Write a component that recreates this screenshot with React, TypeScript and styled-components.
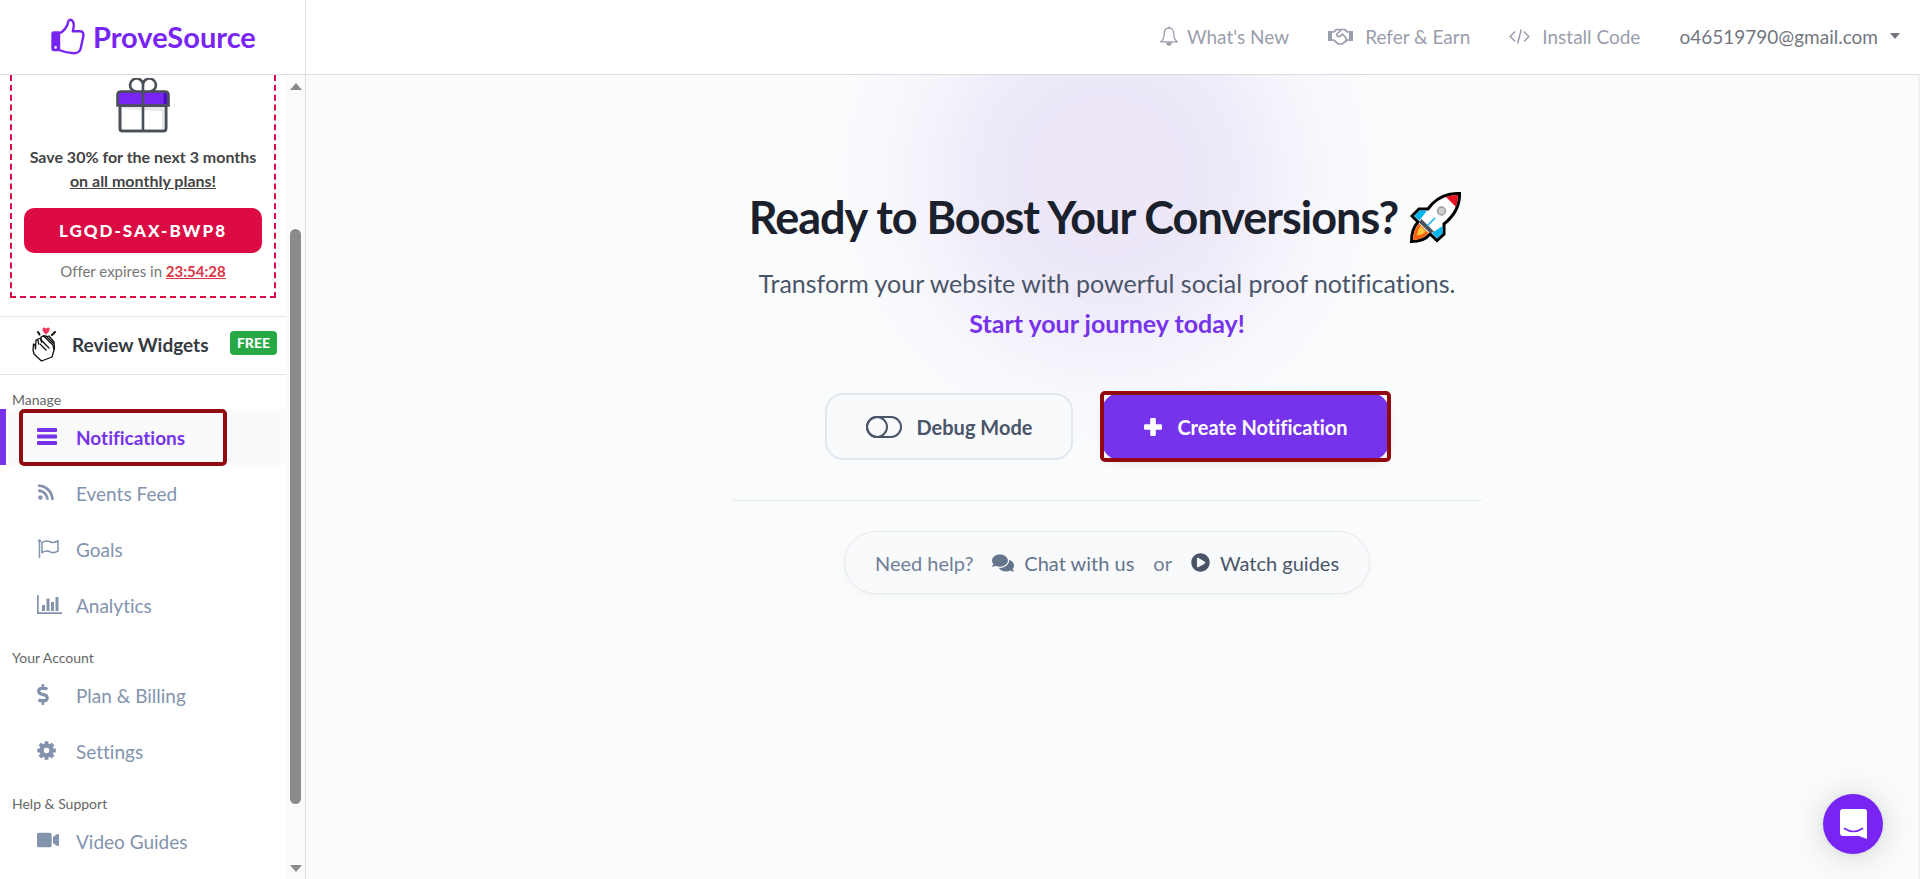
import React from 'react';
import styled, { createGlobalStyle, css } from 'styled-components';
import { FaRss, FaDollarSign, FaVideo, FaComments, FaPlayCircle } from 'react-icons/fa';

const GlobalStyle = createGlobalStyle`
  *, *::before, *::after { box-sizing: border-box; }
  html, body, #root { height: 100%; }
  body {
    margin: 0;
    background: #fafcfc;
    font-family: Lato, sans-serif;
    font-variant-ligatures: none;
    color: #444;
  }
  a { color: inherit; text-decoration: none; }
  button { font: inherit; font-variant-ligatures: none; cursor: pointer; }
  svg { display: block; flex: none; }
`;

const Page = styled.div`
  height: 100%;
  display: flex;
  flex-direction: column;
  overflow: hidden;
`;

const Header = styled.header`
  flex: none;
  height: 75px;
  display: flex;
  background: #fff;
  border-bottom: 1px solid #dcdde1;
`;

const Brand = styled.a`
  width: 306px;
  flex: none;
  display: flex;
  align-items: center;
  gap: 8px;
  padding: 0 0 2px 51px;
  border-right: 1px solid #dcdde1;
  color: #7825f3;
  font-size: 29px;
  font-weight: 700;
`;

const TopNav = styled.nav`
  flex: 1;
  display: flex;
  align-items: center;
  justify-content: flex-end;
  gap: 39px;
  padding: 0 20px 2px 0;
`;

const TopLink = styled.a<{ $gap: number }>`
  display: flex;
  align-items: center;
  gap: ${(p) => p.$gap}px;
  font-size: 19px;
  color: #9a9eac;
`;

const AccountButton = styled.button`
  display: flex;
  align-items: center;
  gap: 12px;
  padding: 0;
  border: 0;
  background: none;
  font-size: 19px;
  color: #74767f;
`;

const Caret = styled.span`
  border: 5px solid transparent;
  border-top: 6px solid #74767f;
  border-bottom: 0;
`;

const Body = styled.div`
  flex: 1;
  min-height: 0;
  display: flex;
`;

const Sidebar = styled.aside`
  width: 306px;
  flex: none;
  display: flex;
  background: #fff;
  border-right: 1px solid #dcdde1;
`;

const SideContent = styled.div`
  flex: 1;
  overflow: hidden;
`;

const ScrollTrack = styled.div`
  width: 19px;
  display: flex;
  flex-direction: column;
  align-items: center;
  padding: 8px 0 7px;
  background: #fbfbfb;
`;

const ScrollArrow = styled.span<{ $down?: boolean }>`
  border: 6px solid transparent;
  ${(p) =>
    p.$down
      ? css`border-top: 7px solid #8b8b8b; border-bottom: 0;`
      : css`border-bottom: 7px solid #8b8b8b; border-top: 0;`}
`;

const ScrollRail = styled.div`
  flex: 1;
  display: grid;
  grid-template-rows: 139fr 573fr 61fr;
`;

const ScrollThumb = styled.span`
  grid-row: 2;
  width: 11px;
  border-radius: 6px;
  background: #8b8b8b;
`;

const Promo = styled.section`
  height: 223px;
  margin: 0 10px 18px;
  padding: 3px 12px 0;
  display: flex;
  flex-direction: column;
  align-items: center;
  border: 2px dashed #dd0b44;
  border-top: 0;
  text-align: center;
`;

const PromoText = styled.p`
  margin: 11px 0 15px;
  font-size: 16px;
  line-height: 24px;
  font-weight: 700;
  color: #444;
  white-space: nowrap;
`;

const Code = styled.button`
  width: 100%;
  height: 45px;
  border: 0;
  border-radius: 10px;
  background: #dd0b44;
  color: #fff;
  font-size: 17px;
  font-weight: 900;
  letter-spacing: 2px;
`;

const Expiry = styled.p`
  margin: 7px 0 0;
  font-size: 15px;
  line-height: 22px;
  color: #777;
  b { color: #dc3545; text-decoration: underline; }
`;

const WidgetsLink = styled.a`
  height: 59px;
  display: flex;
  align-items: center;
  padding: 0 9px 2px 32px;
  border-top: 1px solid #e3e4e8;
  border-bottom: 1px solid #e3e4e8;
  font-size: 19px;
  font-weight: 700;
  color: #343a40;
  white-space: nowrap;
  svg { margin-right: 16px; }
`;

const FreeBadge = styled.span`
  margin: 0 0 4px auto;
  padding: 0 7px;
  border-radius: 4px;
  background: #28a745;
  color: #fff;
  font-size: 14px;
  line-height: 24px;
  font-weight: 900;
`;

const GroupLabel = styled.h2`
  height: 34px;
  margin: 0;
  padding: 16px 12px 0;
  font-size: 14px;
  line-height: 18px;
  font-weight: 400;
  color: #666;
`;

const Group = styled.ul`
  margin: 0;
  padding: 0;
  list-style: none;
`;

const SideLink = styled.a<{ $active?: boolean }>`
  position: relative;
  height: 56px;
  display: flex;
  align-items: center;
  padding-left: ${(p) => (p.$active ? 31 : 37)}px;
  border-left: ${(p) => (p.$active ? '6px solid #7633eb' : '0')};
  background: ${(p) => (p.$active ? '#fafafb' : 'transparent')};
  color: ${(p) => (p.$active ? '#7633eb' : '#8393ae')};
  font-size: 19px;
  font-weight: ${(p) => (p.$active ? 700 : 400)};
`;

const SideIcon = styled.span`
  width: 39px;
  padding-bottom: 2px;
`;

const Highlight = styled.span<{ $inset: string }>`
  position: absolute;
  inset: ${(p) => p.$inset};
  border: 4px solid #910a10;
  border-radius: 5px;
  pointer-events: none;
`;

const Main = styled.main`
  position: relative;
  flex: 1;
  overflow: hidden;
  display: flex;
  flex-direction: column;
  align-items: center;
  padding: 110px 10px 0 0;
  background: #fafcfc;
  border-right: 2px solid #f0f1f2;
`;

const Hero = styled.section`
  position: relative;
  width: 750px;
  max-width: 100%;
  display: flex;
  flex-direction: column;
  align-items: center;
`;

const Glow = styled.div`
  position: absolute;
  top: -310px;
  left: 50%;
  width: 600px;
  height: 600px;
  margin-left: -300px;
  background: radial-gradient(
    circle closest-side,
    #eee7f8 0%,
    #ece7f8 28%,
    #eeeaf9 42%,
    #f4f2fb 60%,
    #f9f9fd 78%,
    rgba(250, 252, 252, 0) 100%
  );
`;

const Title = styled.h1`
  position: relative;
  margin: 0;
  padding-right: 4px;
  display: flex;
  align-items: center;
  gap: 12px;
  font-size: 45px;
  line-height: 64px;
  font-weight: 700;
  letter-spacing: -1px;
  color: #1a202c;
  white-space: nowrap;
`;

const Lead = styled.p`
  position: relative;
  margin: 14px 0 0;
  font-size: 25px;
  line-height: 40px;
  color: #4a5568;
  text-align: center;
  strong { color: #7633eb; }
`;

const Actions = styled.div`
  position: relative;
  display: flex;
  gap: 29px;
  padding: 50px 0 40px;
`;

const ActionButton = styled.button<{ $primary?: boolean }>`
  position: relative;
  height: 67px;
  display: flex;
  align-items: center;
  gap: 15px;
  padding: 0 ${(p) => (p.$primary ? 40 : 39)}px;
  border: 2px solid ${(p) => (p.$primary ? '#7633eb' : '#e2e8f0')};
  border-radius: 18px;
  background: ${(p) => (p.$primary ? '#7633eb' : '#f9fafc')};
  color: ${(p) => (p.$primary ? '#fff' : '#4a5568')};
  font-size: 20px;
  font-weight: 700;
  white-space: nowrap;
  box-shadow: ${(p) => (p.$primary ? '0 4px 8px rgba(0, 0, 0, 0.08)' : 'none')};
`;

const HelpRow = styled.div`
  position: relative;
  width: 100%;
  display: flex;
  justify-content: center;
  padding-top: 30px;
  border-top: 1px solid #e6e9f1;
`;

const HelpPill = styled.div`
  height: 63px;
  display: flex;
  align-items: center;
  gap: 19px;
  padding: 0 30px;
  border: 1px solid #e6e9ef;
  border-radius: 32px;
  background: #f9fafc;
  box-shadow: 0 2px 4px rgba(0, 0, 0, 0.04);
  color: #718096;
  font-size: 20px;
`;

const HelpLink = styled.a<{ $dark?: boolean }>`
  display: flex;
  align-items: center;
  gap: 10px;
  color: ${(p) => (p.$dark ? '#4a5568' : '#64748b')};
`;

const ChatButton = styled.button`
  position: fixed;
  right: 37px;
  bottom: 25px;
  width: 60px;
  height: 60px;
  display: grid;
  place-items: center;
  padding: 0;
  border: 0;
  border-radius: 50%;
  background: #7825f3;
  box-shadow: 0 1px 6px rgba(0, 0, 0, 0.06), 0 2px 32px rgba(0, 0, 0, 0.16);
`;

const ThumbLogo = () => (
  <svg width="34" height="37" viewBox="0 0 34 37" fill="none" stroke="#7825f3" strokeWidth="2.4" strokeLinejoin="round" strokeLinecap="round">
    <path d="M1.5 16 Q1.5 14.5 3 14.5 H8 V32 H3 Q1.5 32 1.5 30.5 Z" fill="#7825f3" />
    <circle cx="4.6" cy="29.4" r="1.3" fill="#fff" stroke="none" />
    <path d="M8 15.5 C12 14 16.5 9 17 4.5 C17.3 1.5 20 1 21.5 3 C24 6 22.5 10.5 21.8 13.3 H29 C32.5 13.3 32.8 16 32.2 18.5 L29.8 30 C29 34 27 35.2 22.5 35.2 C17.5 35.2 14 34.5 8 32" />
  </svg>
);

const GiftIcon = () => (
  <svg width="54" height="56" viewBox="0 0 54 56" fill="none" stroke="#495057" strokeWidth="2.6">
    <path d="M4 28 H50 V50 Q50 53 48 53 H6 Q4 53 4 51 Z" fill="#fff" />
    <path d="M5 29 H49 V51 H46 V33 Q27 33 5 30 Z" fill="#e8e8e8" stroke="none" />
    <path d="M4 28 V50 Q4 53 6 53 H48 Q50 53 50 50 V28" />
    <path d="M1.5 27.5 V17 Q1.5 13.5 5 13.5 H49 Q52.5 13.5 52.5 17 V27.5 Z" fill="#7825f3" />
    <path d="M47.5 15 H49 Q51 15 51 17 V26 H47.5 Z" fill="#4d0bc4" stroke="none" />
    <path d="M27 53 V8 M27 8 A6.5 6.5 0 1 0 20 13.5 M27 8 A6.5 6.5 0 1 1 34 13.5" />
  </svg>
);

const ClapIcon = () => (
  <svg width="24" height="35" viewBox="0 0 24 35" fill="none" stroke="#111" strokeWidth="1.3" strokeLinecap="round" strokeLinejoin="round">
    <path d="M14 7.5 C10 4.5 9.5 0.5 12 0.5 Q13.5 0.5 14 2 Q14.5 0.5 16 0.5 C19 0.5 18 4.5 14 7.5Z" fill="#f5365c" stroke="none" />
    <path d="M6 5 L7.5 7.5 M23 5 L20 8" strokeWidth="2" />
    <path d="M1 23 L1.5 17 L3 18 L3.5 22 L4 13 L6 13 M6.5 17 L6 12 L8.5 11 L9.5 15 L9 10 L11.5 9 L21 18 L22 23 L20 30 L9.5 34 L2 27 L1 23" />
    <path d="M11 9 L14 9 L21 16 M14 10 L17 9 L22 15 L22.5 22 M9 13 L17 21 M8 17 L14 23" />
  </svg>
);

const BarsIcon = () => (
  <svg width="20" height="17" viewBox="0 0 20 17" fill="currentColor">
    <rect width="20" height="4" rx="1" /><rect y="6.5" width="20" height="4" rx="1" /><rect y="13" width="20" height="4" rx="1" />
  </svg>
);

const FlagIcon = () => (
  <svg width="22" height="19" viewBox="0 0 22 19" fill="none" stroke="currentColor" strokeWidth="1.5">
    <path d="M2.5 2 V19" /><circle cx="2.5" cy="1.8" r="1.6" fill="currentColor" stroke="none" />
    <path d="M5 3.5 C9 1 11 1.5 13.5 3 C16 4.3 18 3.5 21 2 V12 C18 13.8 16 14.3 13.5 13 C11 11.5 8.5 11.5 5 13.5 Z" />
  </svg>
);

const ChartIcon = () => (
  <svg width="25" height="19" viewBox="0 0 25 19" fill="currentColor">
    <path d="M0 0 H1.7 V17.3 H25 V19 H0 Z M5 10 H8 V16 H5 Z M9.5 3.5 H12.5 V16 H9.5 Z M14 7 H17 V16 H14 Z M18.5 2 H21.5 V16 H18.5 Z" />
  </svg>
);

const GearIcon = () => (
  <svg width="19" height="19" viewBox="-9.5 -9.5 19 19" fill="currentColor">
    {[0, 45, 90, 135].map((a) => (
      <rect key={a} x="-2" y="-9.3" width="4" height="18.6" rx="0.8" transform={`rotate(${a})`} mask="url(#gear-hole)" />
    ))}
    <mask id="gear-hole" maskUnits="userSpaceOnUse" x="-10" y="-10" width="20" height="20">
      <rect x="-10" y="-10" width="20" height="20" fill="#fff" />
      <circle r="3.1" fill="#000" />
    </mask>
    <circle r="5.1" fill="none" stroke="currentColor" strokeWidth="4" />
  </svg>
);

const PlusIcon = () => (
  <svg width="18" height="18" viewBox="0 0 18 18" fill="currentColor">
    <rect y="6.2" width="18" height="5.6" rx="1.2" /><rect x="6.2" width="5.6" height="18" rx="1.2" />
  </svg>
);

const BellIcon = () => (
  <svg width="18" height="20" viewBox="0 0 18 19" fill="none" stroke="currentColor" strokeWidth="1.3">
    <path d="M9 1.5 C5.5 1.5 4.2 4.5 4.2 7.5 C4.2 11.5 3 13.5 1 15.3 H17 C15 13.5 13.8 11.5 13.8 7.5 C13.8 4.5 12.5 1.5 9 1.5 Z" />
    <path d="M9 0 V2 M7 16.5 A2 2 0 0 0 11 16.5 Z" fill="currentColor" />
  </svg>
);

const HandshakeIcon = () => (
  <svg width="25" height="17" viewBox="0 0 25 17" fill="none" stroke="currentColor" strokeWidth="1.7" strokeLinejoin="round">
    <path d="M0 3 H4 V13 H0 Z M21 3 H25 V13 H21 Z" fill="currentColor" stroke="none" />
    <path d="M4 4 H5.5 L8.5 1.5 H16.5 L19.5 4 H21 M4 12 H5.5 L10.5 16 H14 L19.5 12 H21 M13 2 L8.5 6.5 Q9.5 10 13 7.5 L14.5 6 L18 10 Q19 12 17 13" />
  </svg>
);

const CodeIcon = () => (
  <svg width="21" height="15" viewBox="0 0 21 15" fill="none" stroke="currentColor" strokeWidth="1.5">
    <path d="M6 2.5 L1.2 7.5 L6 12.5 M15 2.5 L19.8 7.5 L15 12.5 M12.3 0.5 L8.7 14.5" />
  </svg>
);

const RocketIcon = () => (
  <svg width="51" height="51" viewBox="0 0 51 51">
    <path d="M49.5 1.5 Q33 1 22 12 L18 17 H9 L2 24 L8 30 Q1.5 37 1.5 49.5 Q14 49.5 20 42 L27 48.5 L34 42 V32 Q50 19 49.5 1.5 Z" fill="#fff" stroke="#000" strokeWidth="3" />
    <path d="M9.7 18.5 H17 L9.5 28.5 L4.5 24 Z M32.5 34 V41.3 L27 46.3 L22 41 Z" fill="#00b4ef" />
    <path d="M9 31.5 Q3.5 37 3 48 Q13 47.5 18.5 41 Z" fill="#f7630c" />
    <path d="M10.5 34 Q7.5 38 7 43.5 Q12.5 43 16 39.5 Z" fill="#ffc83d" />
    <path d="M48 3 Q42 2.8 36 5 L46 15 Q48 9 48 3 Z" fill="#e81224" />
    <path d="M11.5 27 L24 39.5 L20.5 41.5 L9 30.5 Z" fill="#4a5459" />
    <path d="M17 34 L25 26" fill="none" stroke="#00b4ef" strokeWidth="1.5" />
    <circle cx="31.5" cy="19" r="4" fill="#ccc" stroke="#999" strokeWidth="1.3" />
  </svg>
);

const ToggleIcon = () => (
  <svg width="36" height="22" viewBox="0 0 36 22" fill="none" stroke="currentColor" strokeWidth="2">
    <rect x="1" y="1" width="34" height="20" rx="10" /><circle cx="11" cy="11" r="10" />
  </svg>
);

const MessengerIcon = () => (
  <svg width="27" height="30" viewBox="0 0 27 30">
    <path d="M3 0 H24 Q27 0 27 3 V30 L19 27 H3 Q0 27 0 24 V3 Q0 0 3 0 Z" fill="#fff" />
    <path d="M4.5 19.5 Q13.5 25.5 22.5 19.5" fill="none" stroke="#7825f3" strokeWidth="1.6" strokeLinecap="round" />
  </svg>
);

type Item = { label: string; icon: React.ReactNode; active?: boolean };

const groups: { title: string; items: Item[] }[] = [
  {
    title: 'Manage',
    items: [
      { label: 'Notifications', icon: <BarsIcon />, active: true },
      { label: 'Events Feed', icon: <FaRss size={18} /> },
      { label: 'Goals', icon: <FlagIcon /> },
      { label: 'Analytics', icon: <ChartIcon /> },
    ],
  },
  {
    title: 'Your Account',
    items: [
      { label: 'Plan & Billing', icon: <FaDollarSign size={21} preserveAspectRatio="xMinYMid" /> },
      { label: 'Settings', icon: <GearIcon /> },
    ],
  },
  { title: 'Help & Support', items: [{ label: 'Video Guides', icon: <FaVideo size={22} /> }] },
];

export default function App() {
  return (
    <Page>
      <GlobalStyle />
      <Header>
        <Brand href="#"><ThumbLogo />ProveSource</Brand>
        <TopNav>
          <TopLink href="#" $gap={9}><BellIcon />What's New</TopLink>
          <TopLink href="#" $gap={12}><HandshakeIcon />Refer &amp; Earn</TopLink>
          <TopLink href="#" $gap={12}><CodeIcon />Install Code</TopLink>
          <AccountButton type="button">o46519790@gmail.com<Caret /></AccountButton>
        </TopNav>
      </Header>
      <Body>
        <Sidebar>
          <SideContent>
            <Promo>
              <GiftIcon />
              <PromoText>Save 30% for the next 3 months<br /><u>on all monthly plans!</u></PromoText>
              <Code type="button">LGQD-SAX-BWP8</Code>
              <Expiry>Offer expires in <b>23:54:28</b></Expiry>
            </Promo>
            <WidgetsLink href="#"><ClapIcon />Review Widgets<FreeBadge>FREE</FreeBadge></WidgetsLink>
            <nav>
              {groups.map((g) => (
                <React.Fragment key={g.title}>
                  <GroupLabel>{g.title}</GroupLabel>
                  <Group>
                    {g.items.map((i) => (
                      <li key={i.label}>
                        <SideLink href="#" $active={i.active}>
                          <SideIcon>{i.icon}</SideIcon>
                          {i.label}
                          {i.active && <Highlight $inset="0 59px -1px 13px" />}
                        </SideLink>
                      </li>
                    ))}
                  </Group>
                </React.Fragment>
              ))}
            </nav>
          </SideContent>
          <ScrollTrack>
            <ScrollArrow />
            <ScrollRail><ScrollThumb /></ScrollRail>
            <ScrollArrow $down />
          </ScrollTrack>
        </Sidebar>
        <Main>
          <Hero>
            <Glow />
            <Title>Ready to Boost Your Conversions? <RocketIcon /></Title>
            <Lead>
              Transform your website with powerful social proof notifications.<br />
              <strong>Start your journey today!</strong>
            </Lead>
            <Actions>
              <ActionButton type="button"><ToggleIcon />Debug Mode</ActionButton>
              <ActionButton type="button" $primary>
                <PlusIcon />Create Notification
                <Highlight $inset="-4px" />
              </ActionButton>
            </Actions>
            <HelpRow>
              <HelpPill>
                <span>Need help?</span>
                <HelpLink href="#"><FaComments size={22} />Chat with us</HelpLink>
                <span>or</span>
                <HelpLink href="#" $dark><FaPlayCircle size={19} />Watch guides</HelpLink>
              </HelpPill>
            </HelpRow>
          </Hero>
        </Main>
      </Body>
      <ChatButton type="button" aria-label="Open chat"><MessengerIcon /></ChatButton>
    </Page>
  );
}
